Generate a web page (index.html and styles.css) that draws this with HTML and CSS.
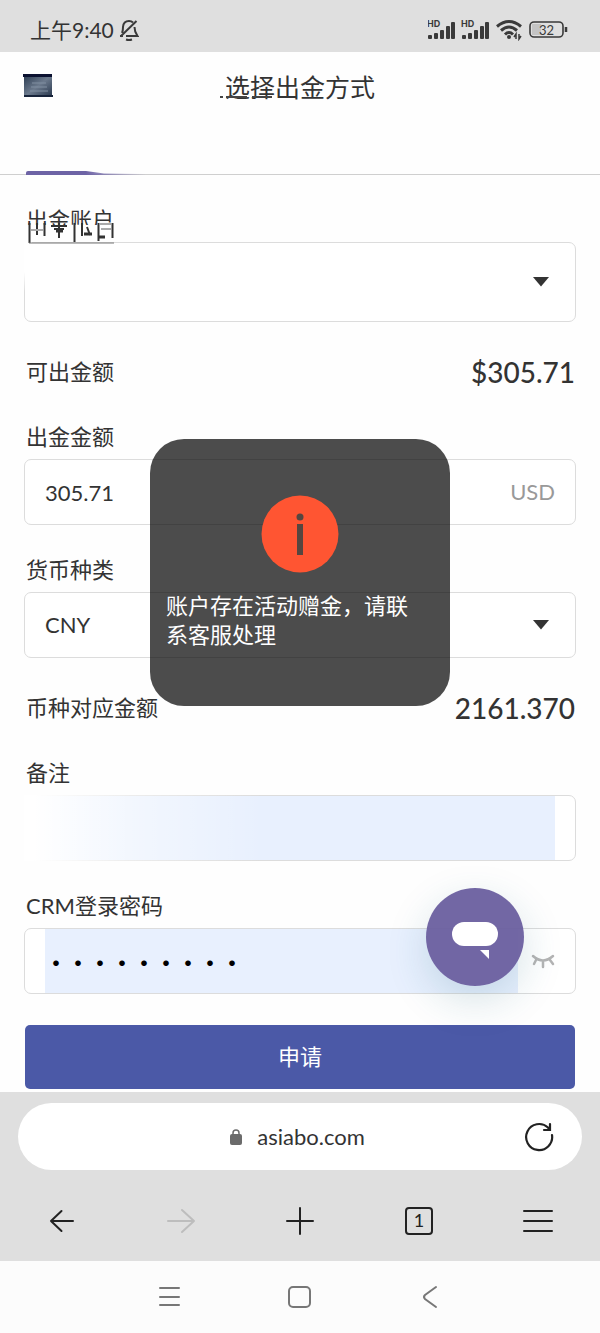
FILE: index.html
```html
<!DOCTYPE html>
<html lang="zh-CN">
<head>
<meta charset="utf-8">
<meta name="viewport" content="width=device-width, initial-scale=1">
<title>选择出金方式</title>
<link rel="stylesheet" href="styles.css">
</head>
<body>
<div class="status">
  <span class="clock">上午9:40</span>
  <svg class="mute" width="20" height="22" viewBox="0 0 20 22" fill="none" stroke="#3a3a3a" stroke-width="2"><path d="M3 14Q4 12 4 8Q4.500 2 10 2Q12.500 2 14 3.500M15.500 8Q15.500 13 18.500 17H7M1.500 17.500L17.500 2M1 17H4M7 20.500Q10 21.500 13 20.500"/></svg>
  <div class="signals">
    <svg width="62" height="22" viewBox="0 0 62 22" fill="#3a3a3a">
      <g id="sim"><text x="-1" y="8" class="hd">HD</text><rect x="0" y="16" width="4" height="4" rx="1"/><rect x="6" y="14" width="4" height="6" rx="1"/><rect x="12" y="11" width="4" height="9" rx="1"/><rect x="18" y="7" width="4" height="13" rx="1"/><rect x="23" y="3" width="4" height="17" rx="1"/></g>
      <use href="#sim" x="34"/>
    </svg>
    <svg width="26" height="22" viewBox="0 0 26 22" fill="none" stroke="#3a3a3a" stroke-width="3"><path d="M1 7.500Q13-2.500 25 7.500M5 11.500Q13 4.500 21 11.500M9 15.500Q13 11.500 17 15.500"/><circle cx="13" cy="18" r="2" fill="#3a3a3a" stroke="none"/><path d="M20 20V15L18 18M23 15V20L25 17" stroke-width="1.500"/></svg>
    <svg width="40" height="22" viewBox="0 0 40 22"><rect x="4" y="5" width="9" height="11" fill="#c4c4c4"/><rect x="2" y="3" width="33" height="15" rx="4" fill="none" stroke="#3a3a3a" stroke-width="1.600"/><path d="M38 8V13" stroke="#3a3a3a" stroke-width="2.500"/><text x="18.500" y="15.500" class="charge">32</text></svg>
  </div>
</div>

<div class="page">
  <header class="header">
    <button class="back" aria-label="返回"><svg width="32" height="26" viewBox="0 0 32 26"><defs><linearGradient id="tile" x2="1" y2="1"><stop stop-color="#2a3a50"/><stop offset=".5" stop-color="#6c7a8d"/><stop offset="1" stop-color="#26354b"/></linearGradient></defs><path d="M2 3H30V25H2Z" fill="url(#tile)"/><path d="M1 2H30V5H1Z" fill="#0b1130"/><path d="M10 11H24M9 15H25M8 19H26" stroke="#8190a2"/><path d="M2 24H31" stroke="#17233a" stroke-width="2"/></svg></button>
    <h1 class="title">选择出金方式</h1>
    <svg class="title-smear" width="56" height="4" viewBox="0 0 56 4"><path d="M0 2H3M6 2H27M32 2H52" stroke="#444" stroke-width="2"/></svg>
    <div class="tab-mark"></div>
  </header>

  <form class="form">
    <div class="field account">
      <label class="label" for="account">出金账户</label>
      <svg class="smudge" width="92" height="22" viewBox="0 0 92 22"><defs><filter id="soft"><feGaussianBlur stdDeviation=".5"/></filter></defs><path d="M0 2H92V19H0Z" fill="#fefefe"/><g filter="url(#soft)" stroke="#333" fill="none"><path d="M3.500 0V20M11 0V12M18.500 0V13M33 0V15M48.500 0V19M56 0V13M61 4L64 12M72.500 0V18M86.500 0V15" stroke-width="2"/><path d="M25 3H41M28 6H38" stroke-width="2"/><path d="M30 8H37M58 11H66M73 14H79" stroke-width="3"/><path d="M5 7H17M74 1H85M75 6H85" stroke="#aaa" stroke-width="2"/></g><path d="M3 20H88" stroke="#777"/></svg>
      <div class="box tall"><select class="control" id="account"><option></option></select><svg class="arrow" width="18" height="10" viewBox="0 0 18 10"><path d="M1 0H17L9 9.500Z" fill="#333"/></svg></div>
    </div>
    <div class="row"><span class="label">可出金额</span><output class="sum">$305.71</output></div>
    <div class="field">
      <label class="label" for="amount">出金金额</label>
      <div class="box"><input class="control" id="amount" type="text" value="305.71"><span class="unit">USD</span></div>
    </div>
    <div class="field">
      <label class="label" for="currency">货币种类</label>
      <div class="box"><select class="control" id="currency"><option>CNY</option></select><svg class="arrow" width="18" height="10" viewBox="0 0 18 10"><path d="M1 0H17L9 9.500Z" fill="#333"/></svg></div>
    </div>
    <div class="row"><span class="label">币种对应金额</span><output class="sum">2161.370</output></div>
    <div class="field">
      <label class="label" for="remark">备注</label>
      <div class="box remark"><input class="control filled" id="remark" type="text"></div>
    </div>
    <div class="field">
      <label class="label" for="password">CRM登录密码</label>
      <div class="box password"><input class="control filled" id="password" type="password" value="123456789"><button class="eye" type="button" aria-label="显示密码"><svg width="24" height="16" viewBox="0 0 24 16" fill="none" stroke="#b4b4b4" stroke-width="2.500" stroke-linecap="round"><path d="M2 3Q12 12 22 3M5 7L3 11M12 8V14M19 7L22 11"/></svg></button></div>
    </div>
    <button class="submit" type="button">申请</button>
  </form>

  <div class="toast" role="alert">
    <svg class="info" width="78" height="78" viewBox="0 0 78 78"><circle cx="39" cy="39" r="38.500" fill="#ff5532"/><circle cx="39" cy="22" r="3.500" fill="#554640"/><path d="M39 29V60" stroke="#554640" stroke-width="6"/></svg>
    <p class="message">账户存在活动赠金，请联系客服处理</p>
  </div>
  <button class="chat" aria-label="客服"><svg width="48" height="38" viewBox="0 0 48 38" fill="#fff"><rect x="1" y="0" width="46" height="24" rx="12"/><path d="M29 28H38V37Z"/></svg></button>
</div>

<div class="browser">
  <div class="address">
    <svg width="14" height="18" viewBox="0 0 14 18"><rect x="1" y="6" width="12" height="11" rx="2" fill="#6b6b6b"/><path d="M4 7V5Q4 2 7 2Q10 2 10 5V7" fill="none" stroke="#6b6b6b" stroke-width="1.500"/></svg>
    <span class="host">asiabo.com</span>
    <button class="reload" aria-label="刷新"><svg width="30" height="30" viewBox="0 0 30 30" fill="none" stroke="#222" stroke-width="2.200" stroke-linecap="round"><path d="M28 13A13 13 0 1 1 24 5.500L25.500 7.500"/><path d="M26 2V8H20"/></svg></button>
  </div>
  <nav class="tools">
    <button aria-label="后退"><svg width="32" height="32" viewBox="0 0 32 32"><path d="M27 16H5M15.500 6L5 16L15.500 26"/></svg></button>
    <button class="off" aria-label="前进" disabled><svg width="32" height="32" viewBox="0 0 32 32"><path d="M3 16H29M17 5L29 16L17 27"/></svg></button>
    <button aria-label="新建"><svg width="32" height="32" viewBox="0 0 32 32"><path d="M3 16H29M16 3V29"/></svg></button>
    <button aria-label="标签页"><svg width="32" height="32" viewBox="0 0 32 32"><rect x="3" y="3" width="26" height="26" rx="3"/><text x="16" y="22" class="count">1</text></svg></button>
    <button aria-label="菜单"><svg width="32" height="32" viewBox="0 0 32 32"><path d="M2 6H30M2 16H30M2 26H30"/></svg></button>
  </nav>
</div>

<nav class="system">
  <button aria-label="最近"><svg width="26" height="26" viewBox="0 0 26 26"><path d="M3 4H22M3 13H22M3 21H22"/></svg></button>
  <button aria-label="主页"><svg width="26" height="26" viewBox="0 0 26 26"><rect x="2" y="3" width="21" height="20" rx="4"/></svg></button>
  <button aria-label="返回"><svg width="26" height="26" viewBox="0 0 26 26"><path d="M19 3L8 11Q6 13 8 15L19 23"/></svg></button>
</nav>
</body>
</html>
```
FILE: styles.css
```css
* { box-sizing: border-box; }
body { margin: 0; background: #fefefe; color: #333; font-family: Lato, "Noto Sans CJK SC", sans-serif; font-size: 22px; line-height: 30px; }
button { padding: 0; border: 0; background: none; font: inherit; color: inherit; }
svg { display: block; flex: none; }

.status { display: flex; align-items: center; height: 52px; padding: 8px 32px 0 30px; background: #dfdfdf; }
.clock { font-size: 21px; }
.mute { margin-left: 5px; }
.signals { display: flex; gap: 6px; margin-left: auto; }
.hd { font: 700 9px Inter, sans-serif; }
.charge { font: 13px Lato, sans-serif; fill: #3a3a3a; text-anchor: middle; }

.page { position: relative; }
.header { position: relative; display: grid; grid-template-columns: 32px 1fr 32px; align-items: start; height: 123px; padding: 20px 22px 0; border-bottom: 1px solid #cfcfcf; }
.title { margin: 0; text-align: center; font-size: 25px; font-weight: 400; }
.title-smear { position: absolute; left: 50%; top: 43px; margin-left: -80px; }
.tab-mark { position: absolute; left: 26px; bottom: -1px; width: 120px; height: 4px; background: linear-gradient(to right, #6d63a5 60px, transparent); border-radius: 2px 0 0 0; clip-path: polygon(0 0, 50% 0, 65% 60%, 100% 75%, 100% 100%, 0 100%); }

.form { display: flex; flex-direction: column; gap: 30px; padding: 30px 24px 2px; }
.field { display: flex; flex-direction: column; gap: 7px; }
.label { padding-left: 2px; }
.account { position: relative; }
.smudge { position: absolute; z-index: 1; left: 2px; top: 18px; }
.box { display: flex; align-items: center; height: 66px; padding: 0 20px; border: 1px solid #dcdcdc; border-radius: 7px; background: #fff; }
.tall { position: relative; height: 80px; }
.tall::before { content: ""; position: absolute; left: -1px; top: -1px; width: 8px; height: 50px; background: linear-gradient(#fff 60%, transparent); }
.control { flex: 1; min-width: 0; height: 100%; padding: 0; border: 0; outline: 0; background: none; appearance: none; color: #333; font: inherit; }
.arrow { margin-right: 5px; }
.unit { color: #999; }
.row { display: flex; align-items: center; justify-content: space-between; height: 40px; }
.sum { padding-right: 1px; font-size: 28px; font-weight: 500; line-height: 40px; }
.filled { background: #e8f0fe; }
.remark { position: relative; padding-left: 0; }
.remark::before { content: ""; position: absolute; left: -1px; top: -1px; bottom: -1px; width: 240px; background: linear-gradient(to right, #fff 10px, rgba(255, 255, 255, .45) 110px, rgba(255, 255, 255, 0)); }
.password .control { font-family: "Noto Sans CJK SC", sans-serif; font-weight: 700; color: #000; }
.eye { margin-left: 13px; }
.submit { height: 64px; margin: 1px; border-radius: 5px; background: #4b59a7; color: #fff; }

.toast { position: absolute; left: 50%; top: 387px; display: flex; flex-direction: column; align-items: center; gap: 18px; width: 300px; padding: 56px 16px 57px; border-radius: 34px; background: rgba(0, 0, 0, .7); color: #fff; transform: translateX(-50%); }
.message { margin: 0; width: 100%; padding-right: 16px; line-height: 29px; }
.chat { position: absolute; right: 76px; bottom: 106px; display: flex; align-items: center; justify-content: center; width: 98px; height: 98px; padding-top: 8px; border-radius: 50%; background: rgba(102, 90, 156, .92); box-shadow: 0 14px 40px rgba(30, 100, 120, .18); }

.browser { padding: 11px 18px 0; background: #dfdfdf; }
.address { position: relative; display: flex; align-items: center; justify-content: center; gap: 14px; height: 67px; padding-right: 6px; border-radius: 34px; background: #fff; }
.reload { position: absolute; right: 28px; }
.tools { display: grid; grid-template-columns: repeat(5, 1fr); height: 91px; margin: 0 -16px; }
.tools button, .system button { display: flex; align-items: center; justify-content: center; }
.tools button { padding-top: 11px; }
.tools svg { fill: none; stroke: #222; stroke-width: 2; stroke-linecap: round; stroke-linejoin: round; }
.tools .off svg { stroke: #bdbdbd; }
.tools .count { font: 18px Lato, sans-serif; fill: #222; stroke: none; text-anchor: middle; }
.system { display: flex; justify-content: center; gap: 104px; height: 72px; background: #fcfcfc; }
.system svg { fill: none; stroke: #777; stroke-width: 2; stroke-linecap: round; }
```
